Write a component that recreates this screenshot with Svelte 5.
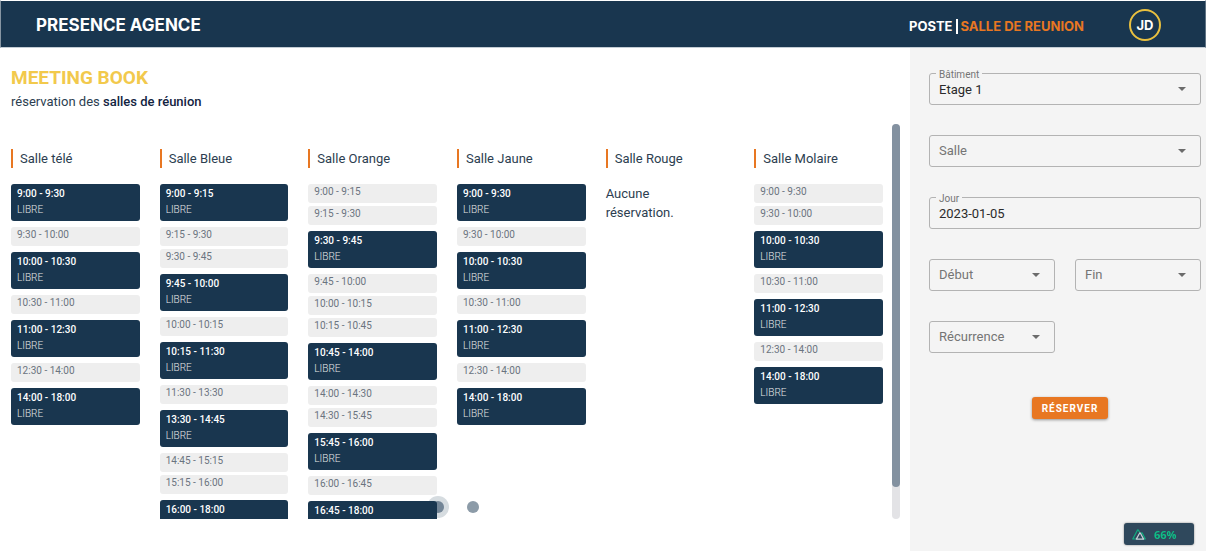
<script>
  const rooms = [
    {
      name: 'Salle télé',
      slots: ['*9:00 - 9:30', '9:30 - 10:00', '*10:00 - 10:30', '10:30 - 11:00', '*11:00 - 12:30', '12:30 - 14:00', '*14:00 - 18:00'],
    },
    {
      name: 'Salle Bleue',
      slots: ['*9:00 - 9:15', '9:15 - 9:30', '9:30 - 9:45', '*9:45 - 10:00', '10:00 - 10:15', '*10:15 - 11:30', '11:30 - 13:30', '*13:30 - 14:45', '14:45 - 15:15', '15:15 - 16:00', '*16:00 - 18:00'],
    },
    {
      name: 'Salle Orange',
      slots: ['9:00 - 9:15', '9:15 - 9:30', '*9:30 - 9:45', '9:45 - 10:00', '10:00 - 10:15', '10:15 - 10:45', '*10:45 - 14:00', '14:00 - 14:30', '14:30 - 15:45', '*15:45 - 16:00', '16:00 - 16:45', '*16:45 - 18:00'],
    },
    {
      name: 'Salle Jaune',
      slots: ['*9:00 - 9:30', '9:30 - 10:00', '*10:00 - 10:30', '10:30 - 11:00', '*11:00 - 12:30', '12:30 - 14:00', '*14:00 - 18:00'],
    },
    { name: 'Salle Rouge', slots: [] },
    {
      name: 'Salle Molaire',
      slots: ['9:00 - 9:30', '9:30 - 10:00', '*10:00 - 10:30', '10:30 - 11:00', '*11:00 - 12:30', '12:30 - 14:00', '*14:00 - 18:00'],
    },
  ].map((room) => ({
    name: room.name,
    // A leading star marks a slot that is still free.
    slots: room.slots.map((s) => ({ free: s.startsWith('*'), time: s.replace('*', '') })),
  }));

  let building = $state('Etage 1');
  let room = $state('');
  let day = $state('2023-01-05');
  let start = $state('');
  let end = $state('');
  let recurrence = $state('');
  let pageIndex = $state(0);
</script>

{#snippet caret()}
  <svg class="caret" viewBox="0 0 8 4" aria-hidden="true"><path d="M0 0h8L4 4z" /></svg>
{/snippet}

<div class="app">
  <header>
    <h1>PRESENCE AGENCE</h1>
    <nav>
      <a href="#poste">POSTE</a>
      <span class="bar"></span>
      <a href="#salle" class="current">SALLE DE REUNION</a>
    </nav>
    <button class="avatar" type="button">JD</button>
  </header>

  <div class="body">
    <main>
      <h2>MEETING BOOK</h2>
      <p class="subtitle">réservation des <strong>salles de réunion</strong></p>

      <div class="schedule">
        <div class="rooms">
          {#each rooms as r}
            <section>
              <h3>{r.name}</h3>
              {#if r.slots.length}
                <ul>
                  {#each r.slots as slot}
                    <li class:free={slot.free}>
                      <span>{slot.time}</span>
                      {#if slot.free}<em>LIBRE</em>{/if}
                    </li>
                  {/each}
                </ul>
              {:else}
                <p class="empty">Aucune réservation.</p>
              {/if}
            </section>
          {/each}
        </div>
        <div class="track"><div class="thumb"></div></div>
      </div>

      <div class="dots">
        {#each [0, 1] as i}
          <button type="button" aria-label="Page {i + 1}" class:active={pageIndex === i} onclick={() => (pageIndex = i)}></button>
        {/each}
      </div>
    </main>

    <aside>
      <form onsubmit={(e) => e.preventDefault()}>
        <div class="field wide">
          <select id="building" bind:value={building}>
            <option>Etage 1</option>
            <option>Etage 2</option>
          </select>
          <label for="building" class:float={building}>Bâtiment</label>
          {@render caret()}
        </div>
        <div class="field wide">
          <select id="room" bind:value={room}>
            <option value=""></option>
            {#each rooms as r}<option>{r.name}</option>{/each}
          </select>
          <label for="room" class:float={room}>Salle</label>
          {@render caret()}
        </div>
        <div class="field wide">
          <input id="day" type="text" bind:value={day} />
          <label for="day" class:float={day}>Jour</label>
        </div>
        <div class="field">
          <select id="start" bind:value={start}>
            <option value=""></option>
            <option>9:00</option>
          </select>
          <label for="start" class:float={start}>Début</label>
          {@render caret()}
        </div>
        <div class="field">
          <select id="end" bind:value={end}>
            <option value=""></option>
            <option>18:00</option>
          </select>
          <label for="end" class:float={end}>Fin</label>
          {@render caret()}
        </div>
        <div class="field">
          <select id="recurrence" bind:value={recurrence}>
            <option value=""></option>
            <option>Hebdomadaire</option>
          </select>
          <label for="recurrence" class:float={recurrence}>Récurrence</label>
          {@render caret()}
        </div>
        <div class="actions wide"><button type="submit">RÉSERVER</button></div>
      </form>
    </aside>
  </div>

  <div class="progress">
    <svg viewBox="0 0 14 11" aria-hidden="true">
      <path class="green" d="M4 10H.8L5.4 1.2Q5.9.5 6.4 1.2L7.6 3.2M9.3 4.2Q9.8 3.5 10.3 4.2L13.3 10H11" />
      <path class="light" d="M4.3 10.1 7.6 4.2Q8 3.6 8.4 4.2L11.6 10.1Z" />
    </svg>
    <span>66%</span>
  </div>
</div>

<style>
  :global(body) {
    margin: 0;
    background: #fff;
  }
  .app {
    box-sizing: border-box;
    height: 100vh;
    display: flex;
    flex-direction: column;
    font-family: Roboto, sans-serif;
    font-size: 13px;
    color: #2c3e50;
  }
  h1, h2, h3, p, ul {
    margin: 0;
    padding: 0;
  }
  button, input, select {
    font-family: inherit;
  }
  header {
    box-sizing: border-box;
    flex: none;
    height: 48px;
    display: flex;
    align-items: center;
    padding: 2px 44px 0 35px;
    border: 1px solid #c3ccd4;
    border-top-color: #fff;
    border-right-color: #5f7384;
    border-left-color: #8796a3;
    background: #19364f;
    font-family: Inter, sans-serif;
    font-variation-settings: "opsz" 14;
    color: #fff;
  }
  h1 {
    flex: 1;
    font-size: 17px;
    font-weight: 700;
  }
  nav {
    display: flex;
    align-items: center;
    gap: 3px;
    margin-right: 45px;
    padding-top: 2px;
    font-size: 13px;
    font-weight: 700;
  }
  nav a {
    color: inherit;
    text-decoration: none;
  }
  nav .current {
    color: #e87722;
  }
  .bar {
    width: 2px;
    height: 15px;
    background: #fff;
  }
  .avatar {
    box-sizing: border-box;
    width: 32px;
    height: 32px;
    padding: 0;
    border: 2px solid #e9c03f;
    border-radius: 50%;
    background: none;
    color: #fff;
    font-size: 13px;
    font-weight: 700;
  }
  .body {
    flex: 1;
    min-height: 0;
    display: flex;
  }
  main {
    position: relative;
    z-index: 0;
    flex: 1;
    min-width: 0;
    display: flex;
    flex-direction: column;
    padding: 18px 10px 32px 11px;
  }
  h2 {
    font-size: 19px;
    line-height: 24px;
    font-weight: 700;
    color: #f2c94c;
  }
  .subtitle {
    margin-top: 3px;
    line-height: 18px;
  }
  .subtitle strong {
    font-weight: 500;
    color: #12233f;
  }
  .schedule {
    flex: 1;
    min-height: 0;
    margin-top: 13px;
    display: flex;
    gap: 9px;
  }
  .rooms {
    flex: 1;
    display: grid;
    grid-template-columns: repeat(6, 1fr);
    gap: 20px;
    padding-top: 25px;
    overflow: hidden;
  }
  .track {
    width: 8px;
    border-radius: 4px;
    background: #e3e3e6;
  }
  .thumb {
    height: 92%;
    border-radius: 4px;
    background: #8391a0;
  }
  h3 {
    padding-left: 7px;
    border-left: 2px solid #e87722;
    font-size: 13px;
    line-height: 19px;
    font-weight: 400;
  }
  ul {
    margin-top: 16px;
    list-style: none;
    display: flex;
    flex-direction: column;
    gap: 3px;
  }
  li {
    box-sizing: border-box;
    height: 19px;
    padding: 0 6px;
    border-radius: 3px;
    background: #eee;
    font-size: 10px;
    line-height: 16px;
    color: #6b7480;
  }
  li.free {
    height: 37px;
    margin: 3px 0;
    padding-top: 2px;
    background: #19364f;
    color: #fff;
    font-weight: 500;
  }
  li.free:first-child {
    margin-top: 0;
  }
  li span, li em {
    display: block;
  }
  li em {
    font-style: normal;
    font-weight: 300;
    color: #e6e6e6;
  }
  .empty {
    margin-top: 16px;
    max-width: 80px;
    line-height: 19px;
  }
  .dots {
    position: absolute;
    z-index: -1;
    left: 0;
    right: 0;
    bottom: 38px;
    display: flex;
    justify-content: center;
    gap: 23px;
  }
  .dots button {
    width: 12px;
    height: 12px;
    padding: 0;
    border: 0;
    border-radius: 50%;
    background: #8c9ba8;
  }
  .dots .active {
    background: #738596;
    box-shadow: 0 0 0 5px #d6dce0;
  }
  aside {
    box-sizing: border-box;
    flex: 0 0 296px;
    padding: 25px 5px 0 19px;
    background: #f4f4f4;
  }
  form {
    display: grid;
    grid-template-columns: 1fr 1fr;
    gap: 30px 20px;
  }
  .wide {
    grid-column: 1 / -1;
  }
  .field {
    position: relative;
  }
  .field select,
  .field input {
    box-sizing: border-box;
    display: block;
    width: 100%;
    height: 32px;
    padding: 0 9px;
    border: 1px solid #b3b3b3;
    border-radius: 3px;
    appearance: none;
    background: none;
    font-size: 13px;
    color: #2b2b2b;
  }
  .field label {
    position: absolute;
    left: 7px;
    top: 7px;
    padding: 0 3px;
    line-height: 18px;
    color: #757575;
    pointer-events: none;
  }
  .field label.float {
    top: -3px;
    background: #f4f4f4;
    font-size: 10px;
    line-height: 10px;
  }
  .caret {
    position: absolute;
    right: 15px;
    top: 14px;
    width: 8px;
    height: 4px;
    fill: #6b6b6b;
    pointer-events: none;
  }
  .actions {
    display: flex;
    justify-content: center;
    padding: 14px 0 0 10px;
  }
  .actions button {
    height: 22px;
    padding: 0 10px;
    border: 0;
    border-radius: 3px;
    background: #e87722;
    box-shadow: 0 1px 3px rgba(0, 0, 0, 0.4);
    color: #fff;
    font-size: 10px;
    font-weight: 700;
    letter-spacing: 1px;
  }
  .progress {
    position: fixed;
    right: 12px;
    bottom: 6px;
    box-sizing: border-box;
    width: 70px;
    height: 22px;
    display: flex;
    align-items: center;
    gap: 8px;
    padding: 0 8px;
    border-radius: 3px;
    background: #2f485c;
    box-shadow: 0 0 2px rgba(0, 0, 0, 0.5);
    font-family: "Open Sans", sans-serif;
    font-size: 11px;
    font-weight: 700;
    color: #0fbf86;
  }
  .progress svg {
    width: 14px;
    height: 11px;
    fill: none;
    stroke-width: 1.2;
    stroke-linejoin: round;
    stroke-linecap: round;
  }
  .green {
    stroke: #0fae80;
  }
  .light {
    stroke: #c9d2d9;
  }
</style>
